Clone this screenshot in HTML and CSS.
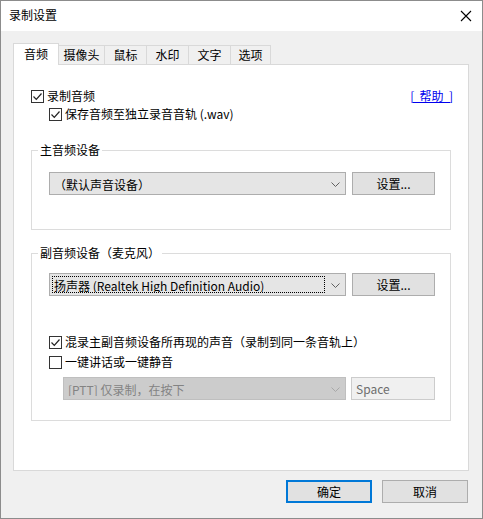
FILE: index.html
```html
<!DOCTYPE html>
<html lang="zh-CN">
<head>
  <meta charset="UTF-8" />
  <title>录制设置</title>
  <link rel="stylesheet" href="styles.css">
</head>
<body>
  <div class="window">
    <div class="titlebar">
      <span class="title">录制设置</span>
      <svg class="close" width="12" height="12" viewBox="0 0 12 12">
        <path d="M1 1 L11 11 M11 1 L1 11" stroke="#000" stroke-width="1.1" fill="none" />
      </svg>
    </div>

    <div class="body">
      <div class="tabs">
        <div class="tab active t1">音频</div>
        <div class="tab t2">摄像头</div>
        <div class="tab t3">鼠标</div>
        <div class="tab t4">水印</div>
        <div class="tab t5">文字</div>
        <div class="tab t6">选项</div>
      </div>

      <div class="panel">
        <div class="row top-row">
          <label class="check">
            <span class="box checked"></span>
            <span>录制音频</span>
          </label>
          <a class="help" href="#">[&nbsp;&nbsp;帮助&nbsp;&nbsp;]</a>
        </div>
        <div class="row sub">
          <label class="check">
            <span class="box checked"></span>
            <span>保存音频至独立录音音轨 (.wav)</span>
          </label>
        </div>

        <fieldset class="group g1">
          <legend>主音频设备</legend>
          <div class="line first">
            <div class="combo">
              <div class="combo-text">（默认声音设备）</div>
              <div class="combo-arrow"></div>
            </div>
            <div class="btn small">设置...</div>
          </div>
        </fieldset>

        <fieldset class="group g2">
          <legend>副音频设备（麦克风）</legend>
          <div class="line first">
            <div class="combo">
              <div class="combo-text focus">扬声器 (Realtek High Definition Audio)</div>
              <div class="combo-arrow"></div>
            </div>
            <div class="btn small">设置...</div>
          </div>

          <div class="row mix">
            <label class="check">
              <span class="box checked"></span>
              <span>混录主副音频设备所再现的声音（录制到同一条音轨上）</span>
            </label>
          </div>
          <div class="row">
            <label class="check">
              <span class="box"></span>
              <span>一键讲话或一键静音</span>
            </label>
          </div>
          <div class="line ptt">
            <div class="combo disabled">
              <div class="combo-text">[PTT] 仅录制，在按下</div>
              <div class="combo-arrow"></div>
            </div>
            <div class="keybox">Space</div>
          </div>
        </fieldset>
      </div>

      <div class="footer">
        <div class="btn default">确定</div>
        <div class="btn">取消</div>
      </div>
    </div>
  </div>
</body>
</html>
```

FILE: styles.css
```css
html, body {
  margin: 0;
  padding: 0;
}
body {
  font-family: "Noto Sans CJK SC", "Liberation Sans", sans-serif;
  font-size: 12px;
  color: #000;
  background: #f0f0f0;
}
.window {
  width: 483px;
  height: 519px;
  box-sizing: border-box;
  border: 1px solid #8c8c8c;
  background: #f0f0f0;
  display: flex;
  flex-direction: column;
}
.titlebar {
  box-sizing: border-box;
  height: 30px;
  background: #fff;
  display: flex;
  align-items: center;
  justify-content: space-between;
  padding: 0 10px 2px 8px;
}
.title {
  line-height: 14px;
}
.close {
  display: block;
  margin-top: 1px;
}

.body {
  flex: 1;
  padding: 12px 14px 0 12px;
}

/* tabs */
.tabs {
  display: flex;
  align-items: flex-end;
  height: 22px;
  margin-bottom: -1px;
  position: relative;
  z-index: 1;
}
.tab {
  box-sizing: border-box;
  height: 20px;
  border: 1px solid #d9d9d9;
  background: #f0f0f0;
  text-align: center;
  line-height: 18px;
  margin-left: -1px;
}
.tab.active {
  height: 22px;
  background: #fff;
  border-bottom: 0;
  line-height: 20px;
  margin-left: 0;
}
.t1 { width: 46px; }
.t2 { width: 47px; }
.t3 { width: 43px; }
.t4 { width: 43px; }
.t5 { width: 43px; }
.t6 { width: 41px; }

.panel {
  box-sizing: border-box;
  width: 456px;
  height: 407px;
  background: #fff;
  border: 1px solid #d9d9d9;
  padding: 22px 15px 0 17px;
}

/* checkbox rows */
.row {
  height: 18px;
  display: flex;
  align-items: center;
  justify-content: space-between;
}
.row.sub {
  padding-left: 18px;
}
.check {
  display: flex;
  align-items: center;
  line-height: 18px;
  white-space: nowrap;
}
.box {
  box-sizing: border-box;
  width: 13px;
  height: 13px;
  border: 1px solid #333;
  background: #fff;
  margin-right: 3px;
  flex: none;
}
.box.checked {
  background: #fff url("data:image/svg+xml;utf8,<svg xmlns='http://www.w3.org/2000/svg' width='11' height='11'><path d='M1.5 5.5 L4.3 8.3 L9.5 2.5' stroke='%23222' stroke-width='1.2' fill='none'/></svg>") no-repeat center;
}
.help {
  color: #0000ee;
  text-decoration: underline;
  margin-top: -2px;
}

/* group boxes */
.group {
  width: 420px;
  box-sizing: border-box;
  margin: 0;
  border: 1px solid #dcdcdc;
  padding: 0 0 0 17px;
}
.group legend {
  padding: 0 2px;
  margin-left: -11px;
  line-height: 12px;
}
.g1 {
  margin-top: 21px;
  padding-bottom: 34px;
}
.g2 {
  margin-top: 17px;
  padding-bottom: 20px;
}
.line {
  display: flex;
  align-items: center;
}
.line.first {
  margin-top: 16px;
}
.g2 .line.first {
  margin-top: 14px;
}
.row.mix {
  margin-top: 37px;
  margin-bottom: 2px;
}

/* combos and buttons */
.combo {
  box-sizing: border-box;
  width: 297px;
  height: 23px;
  border: 1px solid #adadad;
  background: #e5e5e5;
  display: flex;
  align-items: stretch;
}
.combo-text {
  flex: 1;
  margin: 2px 0 2px 2px;
  padding-left: 1px;
  line-height: 17px;
  border: 1px solid transparent;
  white-space: nowrap;
  overflow: hidden;
}
.combo-text.focus {
  border: 1px dotted #000;
}
.combo-arrow {
  width: 20px;
  background: url("data:image/svg+xml;utf8,<svg xmlns='http://www.w3.org/2000/svg' width='9' height='5'><path d='M0.5 0.5 L4.5 4.5 L8.5 0.5' stroke='%23606060' stroke-width='1' fill='none'/></svg>") no-repeat 6px 9px;
}
.combo.disabled {
  width: 283px;
  margin-left: 14px;
  margin-top: 6px;
  background: #cccccc;
  border-color: #bfbfbf;
  color: #838383;
}
.combo.disabled .combo-arrow {
  background-image: url("data:image/svg+xml;utf8,<svg xmlns='http://www.w3.org/2000/svg' width='9' height='5'><path d='M0.5 0.5 L4.5 4.5 L8.5 0.5' stroke='%23a8a8a8' stroke-width='1' fill='none'/></svg>");
}
.keybox {
  box-sizing: border-box;
  width: 84px;
  height: 23px;
  margin-left: 5px;
  margin-top: 6px;
  border: 1px solid #cccccc;
  background: #f0f0f0;
  color: #6d6d6d;
  padding-left: 4px;
  line-height: 21px;
}
.btn {
  box-sizing: border-box;
  width: 86px;
  height: 23px;
  border: 1px solid #adadad;
  background: #e1e1e1;
  text-align: center;
  line-height: 21px;
}
.btn.small {
  width: 83px;
  margin-left: 6px;
}
.btn.default {
  border: 2px solid #0078d7;
  line-height: 19px;
}

.footer {
  display: flex;
  justify-content: flex-end;
  gap: 10px;
  margin-top: 9px;
}
```
